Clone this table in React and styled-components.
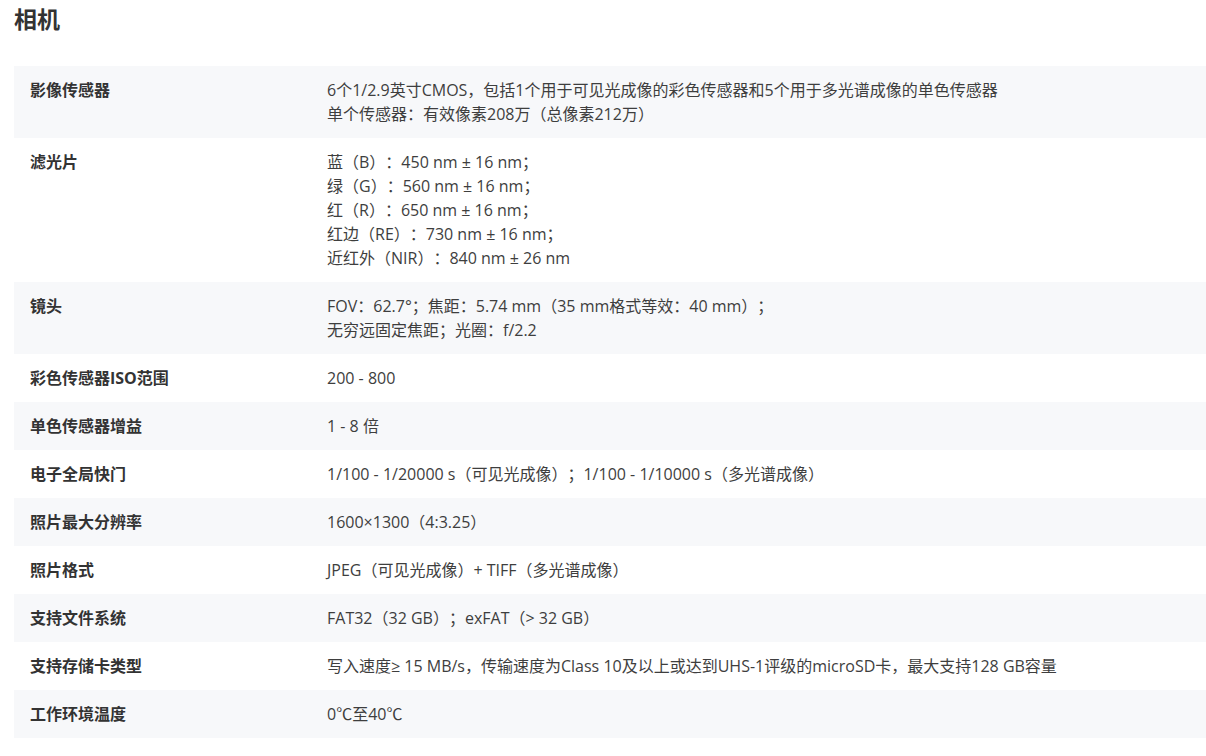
import styled, { createGlobalStyle } from "styled-components";

const GlobalStyle = createGlobalStyle`
  html, body {
    margin: 0;
    padding: 0;
    background: #fff;
  }
  body {
    font-family: "Open Sans", "Noto Sans CJK SC", sans-serif;
    color: #333;
    text-spacing-trim: space-all;
  }
`;

const specs = [
  {
    label: "影像传感器",
    lines: [
      "6个1/2.9英寸CMOS，包括1个用于可见光成像的彩色传感器和5个用于多光谱成像的单色传感器",
      "单个传感器：有效像素208万（总像素212万）",
    ],
  },
  {
    label: "滤光片",
    lines: [
      "蓝（B）：450 nm ± 16 nm；",
      "绿（G）：560 nm ± 16 nm；",
      "红（R）：650 nm ± 16 nm；",
      "红边（RE）：730 nm ± 16 nm；",
      "近红外（NIR）：840 nm ± 26 nm",
    ],
  },
  {
    label: "镜头",
    lines: [
      "FOV：62.7°；焦距：5.74 mm（35 mm格式等效：40 mm）；",
      "无穷远固定焦距；光圈：f/2.2",
    ],
  },
  { label: "彩色传感器ISO范围", lines: ["200 - 800"] },
  { label: "单色传感器增益", lines: ["1 - 8 倍"] },
  {
    label: "电子全局快门",
    lines: ["1/100 - 1/20000 s（可见光成像）；1/100 - 1/10000 s（多光谱成像）"],
  },
  { label: "照片最大分辨率", lines: ["1600×1300（4:3.25）"] },
  { label: "照片格式", lines: ["JPEG（可见光成像）+ TIFF（多光谱成像）"] },
  { label: "支持文件系统", lines: ["FAT32（32 GB）；exFAT（> 32 GB）"] },
  {
    label: "支持存储卡类型",
    lines: [
      "写入速度≥ 15 MB/s，传输速度为Class 10及以上或达到UHS-1评级的microSD卡，最大支持128 GB容量",
    ],
  },
  { label: "工作环境温度", lines: ["0℃至40℃"] },
];

const Page = styled.div`
  padding-left: 14px;
`;

const Title = styled.h2`
  margin: 0;
  font-size: 23px;
  line-height: 38px;
  font-weight: 700;
  color: #333;
`;

const SpecTable = styled.div`
  margin-top: 28px;
  display: flex;
  flex-direction: column;
`;

const Row = styled.div`
  display: grid;
  grid-template-columns: 313px 1fr;
  background: ${(props) => (props.$alt ? "#f7f8fa" : "#fff")};
  padding: 12px 0;
`;

const Label = styled.div`
  padding: 0 16px;
  font-size: 16px;
  line-height: 24px;
  font-weight: 700;
  color: #333;
`;

const Value = styled.div`
  padding-right: 16px;
  font-size: 16px;
  line-height: 24px;
  color: #3e3e3e;
`;

const Line = styled.div`
  white-space: nowrap;
`;

export default function App() {
  return (
    <Page>
      <GlobalStyle />
      <Title>相机</Title>
      <SpecTable>
        {specs.map((spec, i) => (
          <Row key={spec.label} $alt={i % 2 === 0}>
            <Label>{spec.label}</Label>
            <Value>
              {spec.lines.map((line) => (
                <Line key={line}>{line}</Line>
              ))}
            </Value>
          </Row>
        ))}
      </SpecTable>
    </Page>
  );
}
